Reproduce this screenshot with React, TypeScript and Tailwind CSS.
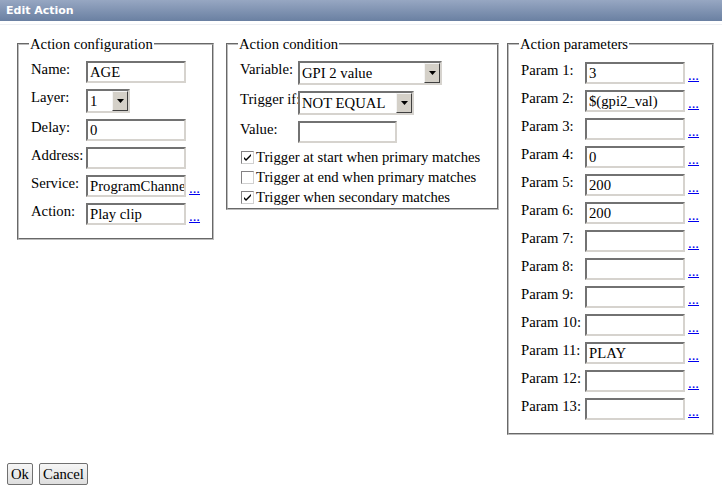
const inputCls =
  "h-[22px] border-2 border-t-[#727272] border-l-[#727272] border-r-[#d6d3ce] border-b-[#d6d3ce] bg-white pl-[2px] leading-[18px] overflow-hidden whitespace-nowrap";

function TextBox({ value = "", w = "w-[100px]" }: { value?: string; w?: string }) {
  return <div className={`${inputCls} ${w}`}>{value}</div>;
}

function SelectBox({ value, w }: { value: string; w: string }) {
  return (
    <div
      className={`${w} h-[24px] flex border-2 border-t-[#727272] border-l-[#727272] border-r-[#d6d3ce] border-b-[#d6d3ce] bg-white`}
    >
      <div className="flex-1 pl-[2px] leading-[20px] overflow-hidden whitespace-nowrap">{value}</div>
      <div className="w-[16px] h-[20px] bg-[#d4d0c8] border border-t-[#f4f4f4] border-l-[#f4f4f4] border-r-[#404040] border-b-[#404040] flex items-center justify-center">
        <svg width="7" height="4" viewBox="0 0 7 4">
          <path d="M0 0h7L3.5 4z" fill="#000" />
        </svg>
      </div>
    </div>
  );
}

function Dots() {
  return <span className="text-[#0000ee] underline ml-[3px] leading-[16px] mb-[1px]">...</span>;
}

function CheckBox({ checked, label }: { checked: boolean; label: string }) {
  return (
    <div className="h-[20px] flex items-center">
      <div className="ml-[1px] w-[13px] h-[13px] border border-t-[#848284] border-l-[#848284] border-r-[#d0d0d0] border-b-[#d0d0d0] bg-white flex items-center justify-center">
        {checked && (
          <svg width="9" height="9" viewBox="0 0 9 9">
            <path d="M1 4l2 2 5-5v2L3 8 1 6z" fill="#000" />
          </svg>
        )}
      </div>
      <span className="ml-[2px] whitespace-nowrap">{label}</span>
    </div>
  );
}

function Row({
  label,
  lw,
  children,
}: {
  label: string;
  lw: string;
  children: React.ReactNode;
}) {
  return (
    <div className="flex items-start">
      <div className={`${lw} shrink-0 leading-[18px] -mt-[1px] whitespace-nowrap`}>{label}</div>
      <div className="flex items-end">{children}</div>
    </div>
  );
}

function Box({ title, w, pb, children }: { title: string; w: string; pb: string; children: React.ReactNode }) {
  return (
    <fieldset className={`${w} border-2 [border-style:groove] border-[#bcbcbc] px-[12px] pt-[8px] ${pb}`}>
      <legend className="-ml-[2px] px-[1px] leading-[18px]">{title}</legend>
      {children}
    </fieldset>
  );
}

const params = ["3", "$(gpi2_val)", "", "0", "200", "200", "", "", "", "", "PLAY", "", ""];

export default function App() {
  return (
    <div className="font-serif">
      <div className="w-[722px] h-[491px] bg-white text-black font-[Liberation_Serif,Times_New_Roman,serif] text-[14.7px]">
        <div className="h-[21px] bg-gradient-to-b from-[#97a7c2] to-[#6a80a2] text-white font-bold font-[DejaVu_Sans,Verdana,sans-serif] text-[11px] leading-[21px] pl-[6px]">
          Edit Action
        </div>
        <div className="h-[1px] mt-[3px] bg-[#eef0f4]" />
        <div className="flex items-start pl-[17px] pt-[10px] gap-[12px]">
          <Box title="Action configuration" w="w-[197px]" pb="pb-[13px]">
            <div className="flex flex-col gap-[6px]">
              <Row label="Name:" lw="w-[55px]">
                <TextBox value="AGE" />
              </Row>
              <Row label="Layer:" lw="w-[55px]">
                <SelectBox value="1" w="w-[44px]" />
              </Row>
              <Row label="Delay:" lw="w-[55px]">
                <TextBox value="0" />
              </Row>
              <Row label="Address:" lw="w-[55px]">
                <TextBox />
              </Row>
              <Row label="Service:" lw="w-[55px]">
                <TextBox value="ProgramChannel" />
                <Dots />
              </Row>
              <Row label="Action:" lw="w-[55px]">
                <TextBox value="Play clip" />
                <Dots />
              </Row>
            </div>
          </Box>
          <Box title="Action condition" w="w-[273px]" pb="pb-[1px]">
            <div className="flex flex-col gap-[6px]">
              <Row label="Variable:" lw="w-[58px]">
                <SelectBox value="GPI 2 value" w="w-[144px]" />
              </Row>
              <Row label="Trigger if:" lw="w-[58px]">
                <SelectBox value="NOT EQUAL" w="w-[116px]" />
              </Row>
              <Row label="Value:" lw="w-[58px]">
                <TextBox w="w-[99px]" />
              </Row>
            </div>
            <div className="mt-[4px] flex flex-col">
              <CheckBox checked label="Trigger at start when primary matches" />
              <CheckBox checked={false} label="Trigger at end when primary matches" />
              <CheckBox checked label="Trigger when secondary matches" />
            </div>
          </Box>
          <div className="-ml-[4px]">
            <Box title="Action parameters" w="w-[207px]" pb="pb-[13px]">
              <div className="flex flex-col gap-[6px] pt-[1px]">
                {params.map((p, i) => (
                  <Row key={i} label={`Param ${i + 1}:`} lw="w-[64px]">
                    <TextBox value={p} />
                    <Dots />
                  </Row>
                ))}
              </div>
            </Box>
          </div>
        </div>
        <div className="flex gap-[6px] pl-[7px] mt-[28px]">
          <button className="h-[22px] w-[26px] border border-[#707070] rounded-[2px] bg-gradient-to-b from-[#f6f6f6] to-[#dedede] leading-[18px]">
            Ok
          </button>
          <button className="h-[22px] w-[49px] border border-[#707070] rounded-[2px] bg-gradient-to-b from-[#f6f6f6] to-[#dedede] leading-[18px]">
            Cancel
          </button>
        </div>
      </div>
    </div>
  );
}
